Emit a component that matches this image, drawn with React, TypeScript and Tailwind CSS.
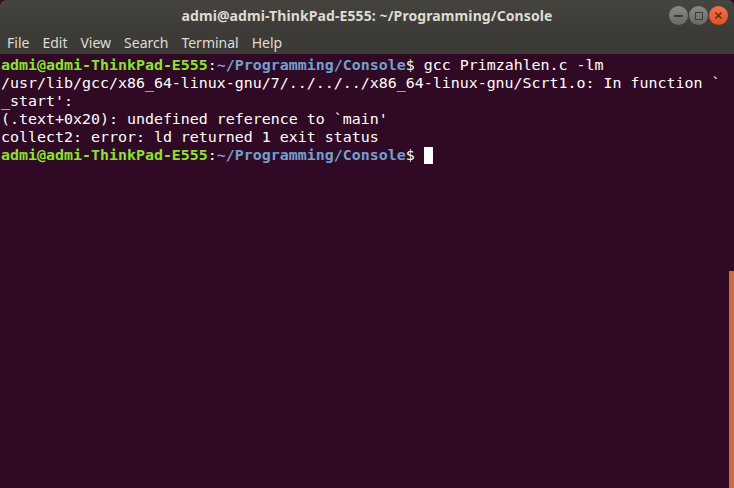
import React from "react";

const mono = { fontFamily: '"DejaVu Sans Mono", "Liberation Mono", monospace' };

function Prompt() {
  return (
    <>
      <span className="font-bold text-[#8ae234]">admi@admi-ThinkPad-E555</span>
      <span className="text-white">:</span>
      <span className="font-bold text-[#729fcf]">~/Programming/Console</span>
      <span className="text-white">$ </span>
    </>
  );
}

export default function App() {
  return (
    <div className="w-[734px] h-[488px] overflow-hidden flex flex-col bg-[#300a24]">
      {/* Title bar */}
      <div className="h-[31px] shrink-0 relative flex items-center justify-center rounded-t-[6px] bg-gradient-to-b from-[#45443f] to-[#3c3b37]">
        <span
          className="text-[14px] font-bold text-[#dfdbd2] tracking-[0.1px]"
          style={{ fontFamily: '"Noto Sans", "Open Sans", sans-serif' }}
        >
          admi@admi-ThinkPad-E555: ~/Programming/Console
        </span>
        <div className="absolute right-[6px] top-[6px] flex gap-[1px]">
          <div className="w-[19px] h-[19px] rounded-full bg-gradient-to-b from-[#8a8984] to-[#6a6965] flex items-center justify-center">
            <div className="w-[9px] h-[2px] bg-[#3c3b37]" />
          </div>
          <div className="w-[19px] h-[19px] rounded-full bg-gradient-to-b from-[#8a8984] to-[#6a6965] flex items-center justify-center">
            <div className="w-[8px] h-[8px] border-[1.5px] border-[#3c3b37]" />
          </div>
          <div className="w-[19px] h-[19px] rounded-full bg-gradient-to-b from-[#f0714a] to-[#e2511f] flex items-center justify-center">
            <svg width="9" height="9" viewBox="0 0 9 9">
              <path d="M1.5 1.5 L7.5 7.5 M7.5 1.5 L1.5 7.5" stroke="#6b2812" strokeWidth="1.6" />
            </svg>
          </div>
        </div>
      </div>
      {/* Menu bar */}
      <div
        className="h-[23px] shrink-0 flex items-center bg-[#3c3b37] text-[14px] text-[#dfdbd2] pl-[7px] gap-[13px]"
        style={{ fontFamily: '"Noto Sans", "Open Sans", sans-serif' }}
      >
        <span>File</span>
        <span>Edit</span>
        <span>View</span>
        <span>Search</span>
        <span>Terminal</span>
        <span>Help</span>
      </div>
      {/* Terminal */}
      <div className="flex-1 relative">
        <div
          className="pl-[1px] pt-[2px] text-[14.95px] leading-[18px] text-white whitespace-pre"
          style={mono}
        >
          <div>
            <Prompt />
            gcc Primzahlen.c -lm
          </div>
          <div>/usr/lib/gcc/x86_64-linux-gnu/7/../../../x86_64-linux-gnu/Scrt1.o: In function `</div>
          <div>_start':</div>
          <div>(.text+0x20): undefined reference to `main'</div>
          <div>collect2: error: ld returned 1 exit status</div>
          <div className="flex items-center">
            <Prompt />
            <span className="inline-block w-[9px] h-[17px] bg-white" />
          </div>
        </div>
        <div className="absolute right-0 top-[217px] bottom-0 w-[5px] bg-[#cd6a40]" />
      </div>
    </div>
  );
}
